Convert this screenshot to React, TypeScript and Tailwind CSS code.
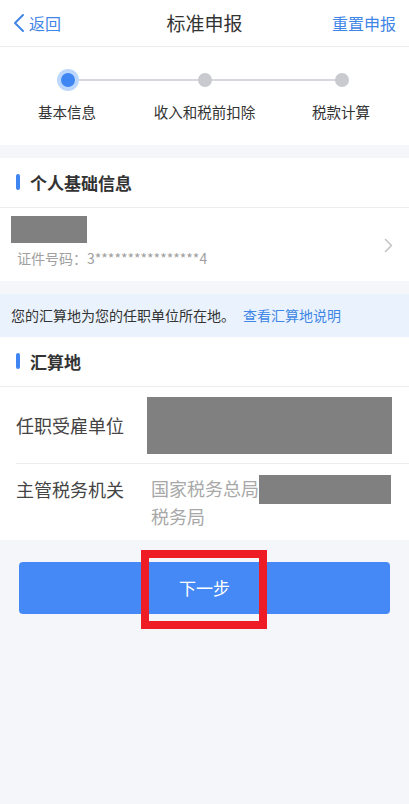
import React from 'react'

const font = { fontFamily: '"Noto Sans CJK SC", "Noto Sans", sans-serif' }

function SectionTitle({ title }: { title: string }) {
  return (
    <div className="flex h-[50px] items-center border-b border-[#ececec] px-4">
      <span className="mr-[10px] h-[16px] w-[4px] rounded-full bg-[#3f86f3]" />
      <span className="text-[17px] font-bold text-[#333]">{title}</span>
    </div>
  )
}

export default function App() {
  return (
    <div className="relative min-h-[804px] w-[409px] bg-[#f5f6fa]" style={font}>
      {/* header */}
      <div className="grid h-[47px] grid-cols-3 items-center border-b border-[#ececec] bg-white px-[13px]">
        <div className="flex items-center text-[16px] text-[#3f86e6]">
          <svg width="12" height="20" viewBox="0 0 12 20" className="mr-[4px]">
            <path d="M10 2 L2 10 L10 18" fill="none" stroke="#3f86e6" strokeWidth="2" strokeLinecap="round" strokeLinejoin="round" />
          </svg>
          返回
        </div>
        <div className="whitespace-nowrap text-center text-[19px] text-[#333]">标准申报</div>
        <div className="text-right text-[16px] text-[#3f86e6]">重置申报</div>
      </div>

      {/* stepper */}
      <div className="bg-white pb-[22px] pt-[22px]">
        <div className="relative mx-auto h-[22px] w-[296px]">
          <div className="absolute left-[11px] right-[11px] top-[10px] h-[2px] bg-[#d6d8de]" />
          <div className="relative flex items-center justify-between">
            <span className="flex h-[22px] w-[22px] items-center justify-center rounded-full bg-[#bcd7fb]">
              <span className="h-[14px] w-[14px] rounded-full bg-[#3f86f3]" />
            </span>
            <span className="flex h-[22px] w-[22px] items-center justify-center">
              <span className="h-[14px] w-[14px] rounded-full bg-[#c8cad0]" />
            </span>
            <span className="flex h-[22px] w-[22px] items-center justify-center">
              <span className="h-[14px] w-[14px] rounded-full bg-[#c8cad0]" />
            </span>
          </div>
        </div>
        <div className="mt-[10px] grid grid-cols-3 text-[14.5px] text-[#333]">
          <div className="pl-[38px]">基本信息</div>
          <div className="text-center">收入和税前扣除</div>
          <div className="pr-[39px] text-right">税款计算</div>
        </div>
      </div>

      {/* personal info */}
      <div className="mt-[13px] bg-white">
        <SectionTitle title="个人基础信息" />
        <div className="flex items-center justify-between pb-[12px] pl-[11px] pr-[16px] pt-[8px]">
          <div>
            <div className="h-[27px] w-[76px] bg-[#808080]" />
            <div className="mt-[5px] pl-[6px] text-[14px] text-[#a0a0a0]">证件号码：3****************4</div>
          </div>
          <svg width="9" height="15" viewBox="0 0 9 15" className="mt-[6px]">
            <path d="M1.5 1.5 L7.5 7.5 L1.5 13.5" fill="none" stroke="#c4c4c4" strokeWidth="1.6" strokeLinecap="round" strokeLinejoin="round" />
          </svg>
        </div>
      </div>

      {/* notice */}
      <div className="mt-[13px] flex h-[43px] items-center bg-[#eaf3fd] px-[11px] text-[14px] text-[#333]">
        您的汇算地为您的任职单位所在地。
        <span className="ml-[8px] text-[#3f86e6]">查看汇算地说明</span>
      </div>

      {/* location */}
      <div className="bg-white">
        <SectionTitle title="汇算地" />
        <div className="pl-4">
          <div className="flex items-center border-b border-[#ececec] pb-[9px] pr-[17px] pt-[10px]">
            <div className="w-[131px] text-[18px] text-[#444]">任职受雇单位</div>
            <div className="h-[57px] flex-1 bg-[#808080]" />
          </div>
          <div className="flex pb-[11px] pr-[18px] pt-[11px]">
            <div className="w-[135px] pt-[1px] text-[18px] text-[#444]">主管税务机关</div>
            <div className="flex-1 text-[18px] leading-[25px] text-[#a8a8a8]">
              <div className="flex items-start">
                <span className="whitespace-nowrap pt-[1px]">国家税务总局</span>
                <span className="h-[29px] flex-1 bg-[#808080]" />
              </div>
              <div>税务局</div>
            </div>
          </div>
        </div>
      </div>

      {/* button */}
      <div className="relative mt-[22px] px-[19px]">
        <button className="flex h-[52px] w-full items-center justify-center rounded-[4px] bg-[#4489f5] text-[17px] text-white">
          下一步
        </button>
        <div className="absolute left-[141px] top-[-12px] h-[79px] w-[126px] border-[8px] border-[#ee1c25]" />
      </div>
    </div>
  )
}
